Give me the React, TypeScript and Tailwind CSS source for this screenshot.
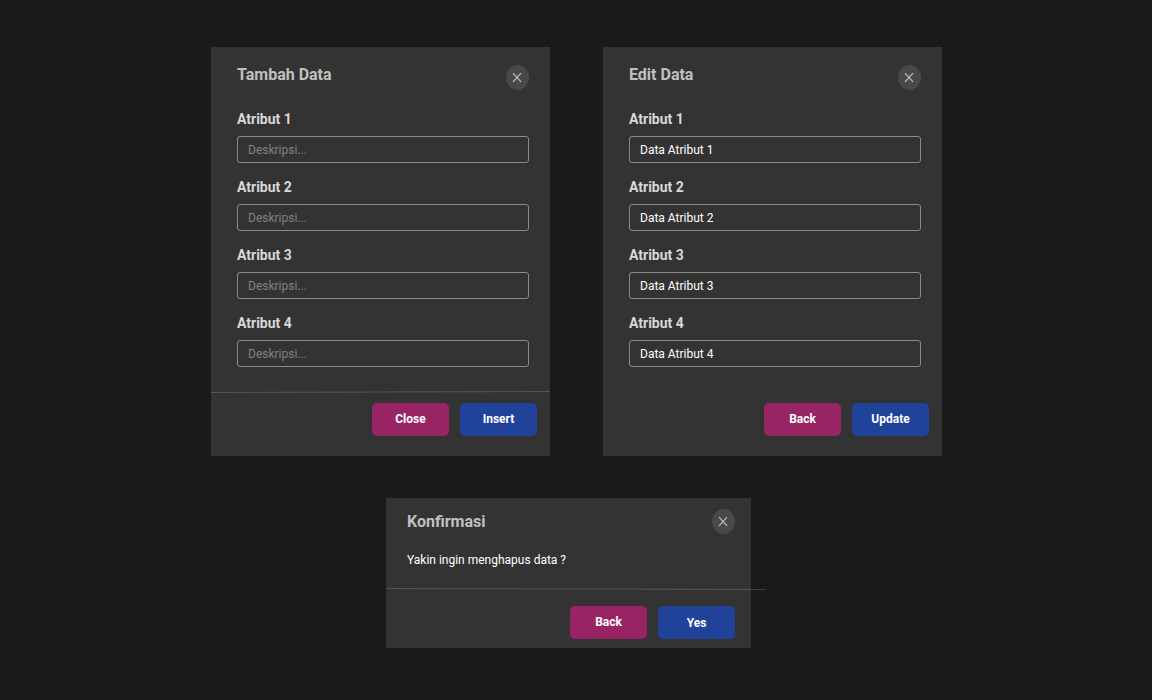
import type { ReactNode } from "react";

function CloseButton() {
  return (
    <button aria-label="Close dialog" className="flex h-[25px] w-[23px] shrink-0 items-center justify-center rounded-[50%] bg-[#494949]">
      <svg width="23" height="25" viewBox="0 0 23 25" fill="none" stroke="#c4c4c4" strokeWidth="1.1">
        <path d="M7 8.2 L15 16.8 M15 8.2 L7 16.8" />
      </svg>
    </button>
  );
}

function Title({ children }: { children: ReactNode }) {
  return <h2 className="text-[16px] leading-5 font-bold text-[#c0c0c0]">{children}</h2>;
}

function Action({ label, tone }: { label: string; tone: "pink" | "blue" }) {
  const color = tone === "pink" ? "bg-[#992463]" : "bg-[#204299]";
  return (
    <button className={`flex h-[33px] w-[77px] items-center justify-center rounded-[5px] pb-px text-[12px] leading-4 font-bold text-white ${color}`}>
      {label}
    </button>
  );
}

function Field({ index, filled }: { index: number; filled: boolean }) {
  return (
    <label className="flex h-[68px] flex-col">
      <span className="mb-[7px] h-5 text-[14px] leading-5 font-bold text-[#d8d8d8]">Atribut {index}</span>
      <input
        className="h-[27px] w-[292px] rounded-[3px] border border-[#8b8b8b] bg-transparent px-[10px] text-[12px] leading-4 text-white placeholder:text-[#828282] placeholder:opacity-100"
        placeholder="Deskripsi..."
        defaultValue={filled ? `Data Atribut ${index}` : ""}
      />
    </label>
  );
}

function FormDialog({ title, filled, actions, divider }: { title: string; filled: boolean; actions: [string, string]; divider: boolean }) {
  return (
    <section className="flex h-[409px] w-[339px] flex-col bg-[#333333]">
      <header className="flex h-[62px] items-start justify-between pt-[18px] pr-[21px] pl-[26px]">
        <Title>{title}</Title>
        <CloseButton />
      </header>
      <div className="flex h-[281px] flex-col pl-[26px]">
        {[1, 2, 3, 4].map((n) => (
          <Field key={n} index={n} filled={filled} />
        ))}
      </div>
      <div className="h-[3px]">
        {divider && (
          <svg className="block" width="339" height="3" viewBox="0 0 339 3">
            <line x1="0" y1="2.5" x2="339" y2="1.5" stroke="#565656" />
          </svg>
        )}
      </div>
      <footer className="flex justify-end gap-[11px] pt-[10px] pr-[13px]">
        <Action label={actions[0]} tone="pink" />
        <Action label={actions[1]} tone="blue" />
      </footer>
    </section>
  );
}

function ConfirmDialog() {
  return (
    <section className="flex h-[150px] w-[365px] flex-col bg-[#333333]">
      <header className="flex h-[52px] items-start justify-between pt-[11px] pr-[16px] pl-[21px]">
        <div className="pt-[3px]">
          <Title>Konfirmasi</Title>
        </div>
        <CloseButton />
      </header>
      <p className="h-[37px] pl-[21px] text-[12px] leading-5 text-white">Yakin ingin menghapus data ?</p>
      <svg className="block w-[380px] shrink-0" width="380" height="4" viewBox="0 0 380 4">
        <line x1="0" y1="1.5" x2="380" y2="2.5" stroke="#ffffff" strokeOpacity="0.17" />
      </svg>
      <footer className="flex justify-end gap-[11px] pt-[15px] pr-[16px]">
        <Action label="Back" tone="pink" />
        <button className="flex h-[33px] w-[77px] items-center justify-center rounded-[5px] bg-[#204299] pt-px text-[12px] leading-4 font-bold text-white">
          Yes
        </button>
      </footer>
    </section>
  );
}

export default function App() {
  return (
    <main className="flex h-[700px] w-[1152px] flex-col gap-[42px] overflow-hidden bg-[#1a1a1a] pt-[47px] font-['Roboto',sans-serif]">
      <div className="flex gap-[53px] pl-[211px]">
        <FormDialog title="Tambah Data" filled={false} actions={["Close", "Insert"]} divider />
        <FormDialog title="Edit Data" filled actions={["Back", "Update"]} divider={false} />
      </div>
      <div className="pl-[386px]">
        <ConfirmDialog />
      </div>
    </main>
  );
}
